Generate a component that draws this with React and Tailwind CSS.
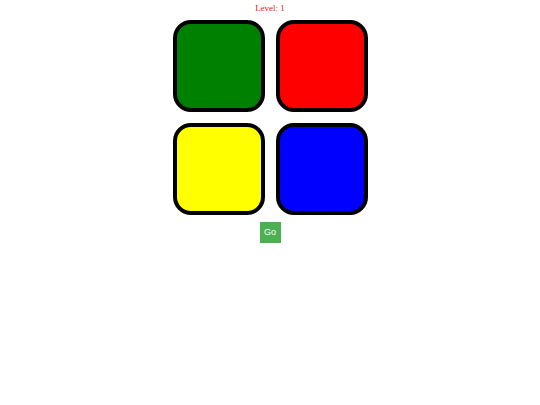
export default function App() {
  const pads = ['bg-[#008000]', 'bg-[#ff0000]', 'bg-[#ffff00]', 'bg-[#0000ff]']
  return (
    <div className="w-[540px] h-[405px] bg-white flex flex-col items-center">
      <div className="h-[20px] pt-[3px] text-[9px] leading-[11px] text-[#e02020]" style={{ fontFamily: '"Liberation Serif", serif' }}>
        Level: 1
      </div>
      <div className="grid grid-cols-2 gap-[11px] w-[195px]">
        {pads.map(c => (
          <div key={c} className={`w-[92px] h-[92px] rounded-[18px] border-[4px] border-black ${c}`} />
        ))}
      </div>
      <button
        className="mt-[7px] w-[21px] h-[21px] bg-[#4caf50] text-white text-[9px] flex items-center justify-center"
        style={{ fontFamily: '"Liberation Sans", Arial, sans-serif' }}
      >
        Go
      </button>
    </div>
  )
}
